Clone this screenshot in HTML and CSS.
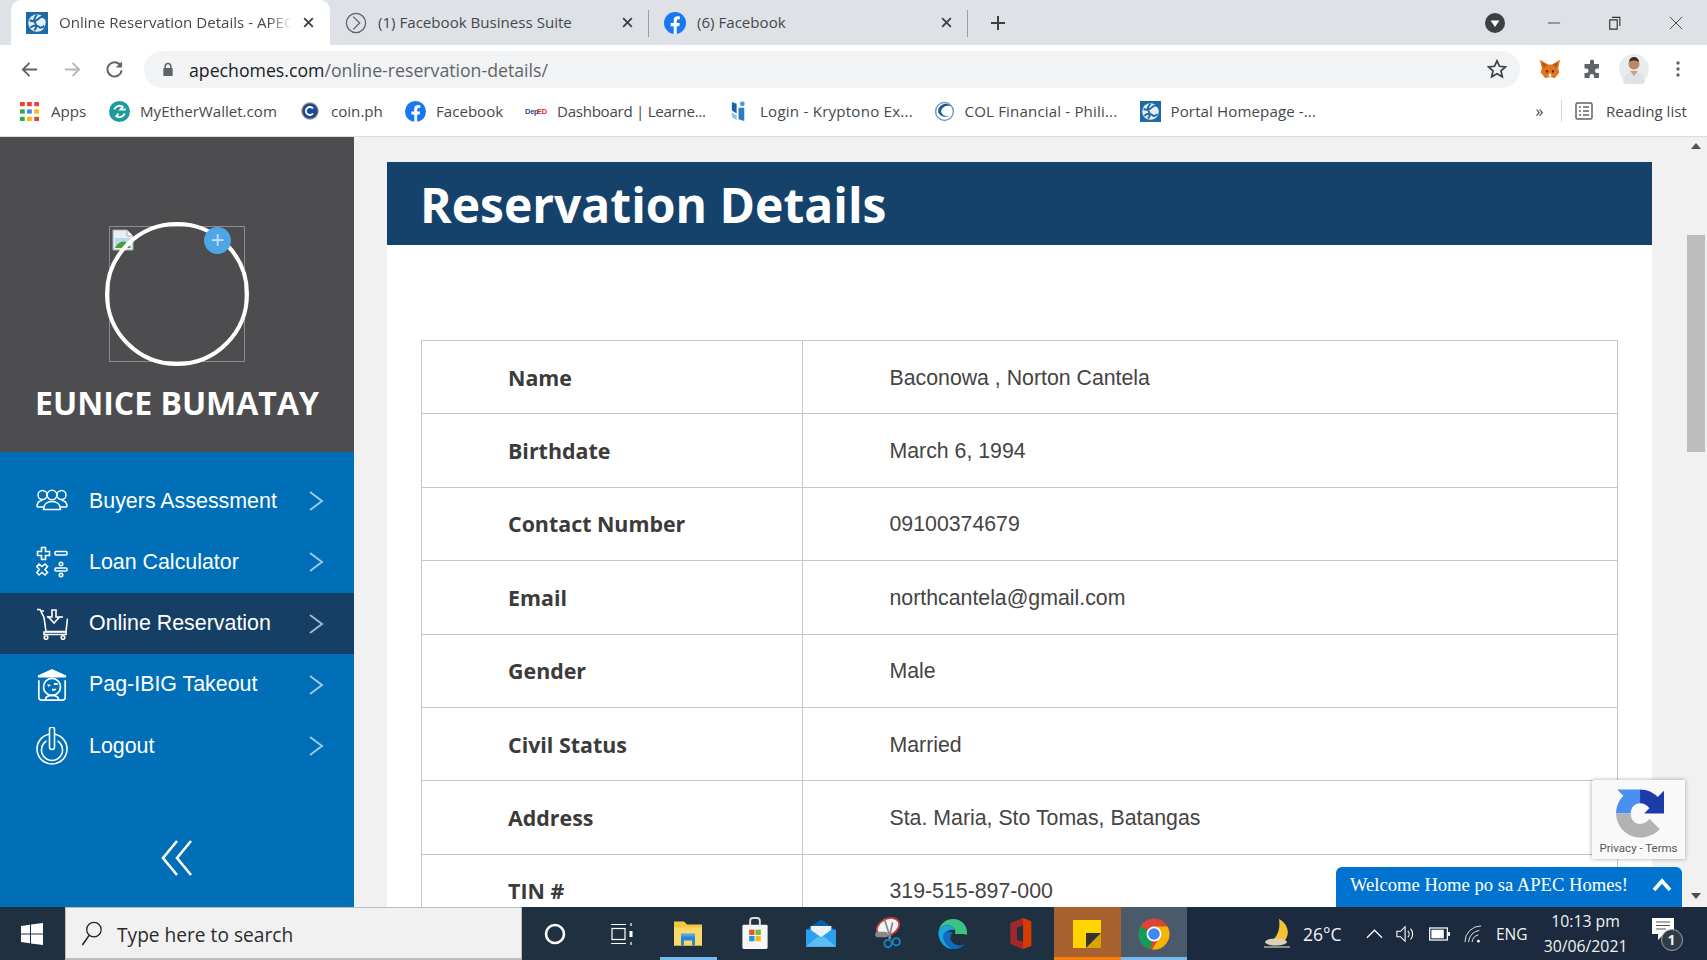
FILE: index.html
```html
<!DOCTYPE html>
<html lang="en">
<head>
<meta charset="utf-8">
<title>Online Reservation Details - APEC Homes</title>
<link rel="stylesheet" href="styles.css">
</head>
<body>
<svg class="defs" width="0" height="0">
  <symbol id="fb" viewBox="0 0 24 24"><circle cx="12" cy="12" r="12" fill="#1877f2"/><path d="M16.7 15.5l.5-3.5h-3.3V9.8c0-1 .5-1.9 2-1.9h1.5v-3c-2.9-.5-6.8-.6-6.8 4.3V12H7.3v3.5h3.3V24h3.3v-8.5z" fill="#fff"/></symbol>
  <symbol id="apec" viewBox="0 0 24 24"><rect width="24" height="24" fill="#1c6aa8"/><circle cx="12" cy="12" r="9.5" fill="#e6eef5"/><path d="M12 3c-3 3-4 6-2 9s1 6-1 8M4 9c4 2 7 1 10-2s5-2 7 0M5 17c3-3 7-3 9-1s4 1 6-1" fill="none" stroke="#1c6aa8" stroke-width="2.2"/></symbol>
  <symbol id="x" viewBox="0 0 12 12"><path d="M2 2l8 8M10 2l-8 8" stroke="#3c4043" stroke-width="1.7" fill="none"/></symbol>
  <symbol id="chev" viewBox="0 0 16 22"><path d="M2 2l12 9-12 9" fill="none" stroke="#fff" stroke-opacity=".62" stroke-width="2"/></symbol>
</svg>

<header class="tabstrip">
  <div class="tab active">
    <svg class="fav"><use href="#apec"/></svg>
    <span class="tab-title fade">Online Reservation Details - APEC</span>
    <svg class="tab-x"><use href="#x"/></svg>
  </div>
  <div class="tab sep">
    <svg class="fav" viewBox="0 0 24 24"><circle cx="12" cy="12" r="10.5" fill="none" stroke="#5f6368" stroke-width="1.4"/><path d="M9 5l7 7-7 7" fill="none" stroke="#5f6368" stroke-width="1.4"/></svg>
    <span class="tab-title">(1) Facebook Business Suite</span>
    <svg class="tab-x"><use href="#x"/></svg>
  </div>
  <div class="tab sep">
    <svg class="fav"><use href="#fb"/></svg>
    <span class="tab-title">(6) Facebook</span>
    <svg class="tab-x"><use href="#x"/></svg>
  </div>
  <svg class="newtab" viewBox="0 0 16 16"><path d="M8 1v14M1 8h14" stroke="#3c4043" stroke-width="2"/></svg>
  <svg class="tabsearch" viewBox="0 0 20 20"><circle cx="10" cy="10" r="10" fill="#3c4043"/><path d="M5.5 7.5h9L10 14z" fill="#fff"/></svg>
  <div class="winbtns">
    <svg viewBox="0 0 16 16"><path d="M1 8h14" stroke="#555" stroke-width="1.2"/></svg>
    <svg viewBox="0 0 16 16"><path d="M4.5 1.5h9v10M2 4.500h8.500V15H2z" fill="none" stroke="#333" stroke-width="1.3"/></svg>
    <svg viewBox="0 0 16 16"><path d="M1 1l14 14M15 1L1 15" stroke="#444" stroke-width="1.1"/></svg>
  </div>
</header>

<div class="toolbar">
  <svg class="nav-ico" viewBox="0 0 20 20"><path d="M18 10H3M10 3l-7 7 7 7" fill="none" stroke="#5f6368" stroke-width="2"/></svg>
  <svg class="nav-ico dim" viewBox="0 0 20 20"><path d="M2 10h15M10 3l7 7-7 7" fill="none" stroke="#b4b7bb" stroke-width="2"/></svg>
  <svg class="nav-ico" viewBox="0 0 20 20"><path d="M16.500 6A7.500 7.500 0 1 0 17.500 11" fill="none" stroke="#5f6368" stroke-width="2"/><path d="M17.800 1.500v6.500h-6.500z" fill="#5f6368"/></svg>
  <div class="omnibox">
    <svg class="lock" viewBox="0 0 12 16"><path d="M3 7V4.500a3 3 0 0 1 6 0V7" fill="none" stroke="#5f6368" stroke-width="1.600"/><rect x="1" y="6.500" width="10" height="8.500" rx="1" fill="#5f6368"/></svg>
    <span class="url"><span class="host">apechomes.com</span>/online-reservation-details/</span>
    <svg class="star" viewBox="0 0 20 20"><path d="M10 1.800l2.500 5.500 6 .6-4.500 4 1.300 5.900L10 14.800l-5.300 3 1.300-5.900-4.500-4 6-.6z" fill="none" stroke="#3c4043" stroke-width="1.700"/></svg>
  </div>
  <div class="ext">
    <svg class="ext-fox" viewBox="0 0 24 24"><path d="M1 2l9 5h4l9-5-2 9 1 5-5 6-3-1h-4l-3 1-5-6 1-5z" fill="#e2761b"/><path d="M7 13l3 1-1 3zM17 13l-3 1 1 3z" fill="#33241a"/><path d="M10 19l2-3 2 3-2 2z" fill="#f5e6d8"/><path d="M3 4l6 4-4 3zM21 4l-6 4 4 3z" fill="#b5591a"/></svg>
    <svg class="ext-puzzle" viewBox="0 0 20 20"><path d="M8 2.500a2 2 0 0 1 4 0V5h5v4.500h-1.800a2.200 2.200 0 0 0 0 4.400H17V19h-5v-1.800a2.200 2.200 0 0 0-4.400 0V19H2.500v-5h1.800a2.200 2.200 0 0 0 0-4.500H2.500V5H8z" fill="#5f6368"/></svg>
    <svg class="ext-avatar" viewBox="0 0 30 30"><circle cx="15" cy="15" r="15" fill="#e9ecec"/><path d="M4 28c1-7 5-10 11-10s10 3 11 10a15 15 0 0 1-22 0z" fill="#dfe3e4"/><circle cx="15" cy="10" r="5.500" fill="#b58a68"/><path d="M10 8a5 5 0 0 1 10 0c-3-2-7-2-10 0z" fill="#3a2a20"/><path d="M11 17l4 5 4-5z" fill="#c2a58d"/></svg>
    <svg class="ext-dots" viewBox="0 0 4 16"><circle cx="2" cy="2" r="1.700" fill="#5f6368"/><circle cx="2" cy="8" r="1.700" fill="#5f6368"/><circle cx="2" cy="14" r="1.700" fill="#5f6368"/></svg>
  </div>
</div>

<nav class="bookmarks">
  <a class="bm bm-apps"><svg class="bm-ico" viewBox="0 0 18 18"><g fill="#ea4335"><rect width="4.500" height="4" x="0" y="0"/><rect width="4.500" height="4" x="6.700" y="0"/><rect width="4.500" height="4" x="13.500" y="0"/></g><g fill="#34a853"><rect width="4.500" height="4" x="0" y="7"/></g><rect width="4.500" height="4" x="6.700" y="7" fill="#4285f4"/><rect width="4.500" height="4" x="13.500" y="7" fill="#fbbc05"/><g fill="#34a853"><rect width="4.500" height="4" x="0" y="14"/></g><g fill="#fbbc05"><rect width="4.500" height="4" x="6.700" y="14"/></g><rect width="4.500" height="4" x="13.500" y="14" fill="#ea4335"/></svg>Apps</a>
  <a class="bm bm-mew"><svg class="bm-ico" viewBox="0 0 20 20"><circle cx="10" cy="10" r="10" fill="#1f9a9c"/><path d="M5 8a5.500 5.500 0 0 1 8-2.500l-2 2.500h5M15 12a5.500 5.500 0 0 1-8 2.500l2-2.500" fill="none" stroke="#fff" stroke-width="1.900"/></svg>MyEtherWallet.com</a>
  <a class="bm bm-coin"><svg class="bm-ico small" viewBox="0 0 18 18"><circle cx="9" cy="9" r="9" fill="#c9b27a"/><circle cx="9" cy="9" r="7.800" fill="#1a4aa0"/><path d="M12 6.500a4 4 0 1 0 0 5" fill="none" stroke="#fff" stroke-width="1.800"/></svg>coin.ph</a>
  <a class="bm bm-fb"><svg class="bm-ico"><use href="#fb"/></svg>Facebook</a>
  <a class="bm bm-deped"><svg class="bm-ico" viewBox="0 0 22 12"><text class="deped-d" x="0" y="9">Dep</text><text class="deped-e" x="12" y="9">ED</text></svg>Dashboard | Learne...</a>
  <a class="bm bm-kr"><svg class="bm-ico" viewBox="0 0 20 22"><path d="M2 1l5 2v10l-5-3z" fill="#1a5fa8"/><circle cx="13" cy="3" r="2.500" fill="#3aa0dc"/><path d="M9 7h6v14l-6-2z" fill="#2b7cc0"/><path d="M2 12l5 3v5l-5-3z" fill="#8fc5e8"/></svg>Login - Kryptono Ex...</a>
  <a class="bm bm-col"><svg class="bm-ico" viewBox="0 0 20 20"><circle cx="10" cy="10" r="8.500" fill="none" stroke="#7a9cc0" stroke-width="1.400"/><path d="M16 5A7 7 0 0 0 4 11c2 4 7 5 11 3-3 1-7 0-8-3-1-4 4-8 9-6z" fill="#1b5e96"/></svg>COL Financial - Phili...</a>
  <a class="bm bm-portal"><svg class="bm-ico large"><use href="#apec"/></svg>Portal Homepage -...</a>
  <span class="bm-more">»</span>
  <span class="bm-sep"></span>
  <svg class="bm-list" viewBox="0 0 18 18"><rect x="1" y="1" width="16" height="16" rx="1.500" fill="none" stroke="#5f6368" stroke-width="1.500"/><path d="M4 5h2M8 5h6M4 9h2M8 9h6M4 13h2M8 13h6" stroke="#5f6368" stroke-width="1.500"/></svg>
  <span class="bm-reading">Reading list</span>
</nav>

<main class="page">
  <aside class="sidebar">
    <div class="profile">
      <div class="avatar">
        <svg class="broken" viewBox="0 0 22 22"><path d="M1 1h14l6 6v14H1z" fill="#e9eef2" stroke="#a9adb2"/><path d="M15 1v6h6" fill="#fff" stroke="#a9adb2"/><rect x="3" y="9" width="16" height="10" fill="#b9d7ef"/><path d="M3 19c3-6 8-8 12-5l4 5z" fill="#4aa02c"/></svg>
        <div class="ring"></div>
        <div class="plus">+</div>
      </div>
      <h2 class="person">EUNICE BUMATAY</h2>
    </div>
    <ul class="menu">
      <li class="menu-item">
        <svg class="menu-ico" viewBox="0 0 32 32"><g fill="none" stroke="#fff" stroke-width="1.500"><circle cx="6.500" cy="10" r="4.500"/><circle cx="25.500" cy="10" r="4.500"/><circle cx="16" cy="10" r="4.800"/><path d="M1 22c0-4 2-6.500 5.500-6.500M31 22c0-4-2-6.500-5.500-6.500M1 22h6M25 22h6"/><path d="M7.500 24.500c0-5 3.500-8 8.500-8s8.500 3 8.500 8z"/></g></svg>
        <span class="menu-label">Buyers Assessment</span><svg class="menu-chev"><use href="#chev"/></svg>
      </li>
      <li class="menu-item">
        <svg class="menu-ico" viewBox="0 0 32 32"><g fill="none" stroke="#fff" stroke-width="1.600"><path d="M5.500 1.500h4v4h4v4h-4v4h-4v-4h-4v-4h4z"/><rect x="19" y="5.500" width="12" height="3.500" rx="1"/><path d="M3 18l3 2.500L9 18l2.500 2.500-2.500 3 2.500 3L9 29l-3-2.500L3 29 .8 26.500l2.500-3-2.500-3z"/><rect x="19" y="22" width="12" height="3" rx="1"/><circle cx="25" cy="18" r="1.700"/><circle cx="25" cy="29" r="1.700"/></g></svg>
        <span class="menu-label">Loan Calculator</span><svg class="menu-chev"><use href="#chev"/></svg>
      </li>
      <li class="menu-item current">
        <svg class="menu-ico" viewBox="0 0 32 32"><g fill="none" stroke="#fff" stroke-width="1.600"><path d="M1 1.500h3l4 8 2 14h20l1.500-13"/><path d="M5 3l3 0M11 9h3M24 9h3"/><path d="M16 2h4v7h3.500L18 15l-5.500-6H16z"/><path d="M8 24h22v2.500H8z"/><circle cx="10" cy="29.500" r="1.800"/><circle cx="27" cy="29.500" r="1.800"/></g></svg>
        <span class="menu-label">Online Reservation</span><svg class="menu-chev"><use href="#chev"/></svg>
      </li>
      <li class="menu-item">
        <svg class="menu-ico" viewBox="0 0 32 34"><path d="M16 0L31 7v2H1V7z" fill="#fff"/><g fill="none" stroke="#fff" stroke-width="1.800"><path d="M2 12v18a3 3 0 0 0 3 3h22a3 3 0 0 0 3-3V12"/><circle cx="16" cy="19" r="9"/><path d="M9 33c0-4 3-5 7-5s7 1 7 5"/></g><path d="M11 16l4 1-3 2zM16 21h5l-2 2h-3zM18 15h4v2h-4z" fill="#fff"/></svg>
        <span class="menu-label">Pag-IBIG Takeout</span><svg class="menu-chev"><use href="#chev"/></svg>
      </li>
      <li class="menu-item">
        <svg class="menu-ico tall" viewBox="0 0 32 38"><g fill="none" stroke="#fff" stroke-width="1.600"><circle cx="16" cy="22" r="15"/><path d="M10.500 14a10.500 10.500 0 1 0 11 0"/><path d="M13.500 2.500a2.500 2.500 0 0 1 5 0V20a2.500 2.500 0 0 1-5 0z" fill="#006fb8"/></g></svg>
        <span class="menu-label">Logout</span><svg class="menu-chev"><use href="#chev"/></svg>
      </li>
    </ul>
    <svg class="collapse" viewBox="0 0 32 36"><path d="M16 1L2 18l14 17M30 1L16 18l14 17" fill="none" stroke="#fff" stroke-width="2.600"/></svg>
  </aside>

  <section class="content">
    <div class="card">
      <h1 class="banner">Reservation Details</h1>
      <div class="details">
        <div class="row"><div class="key">Name</div><div class="val">Baconowa , Norton Cantela</div></div>
        <div class="row"><div class="key">Birthdate</div><div class="val">March 6, 1994</div></div>
        <div class="row"><div class="key">Contact Number</div><div class="val">09100374679</div></div>
        <div class="row"><div class="key">Email</div><div class="val">northcantela@gmail.com</div></div>
        <div class="row"><div class="key">Gender</div><div class="val">Male</div></div>
        <div class="row"><div class="key">Civil Status</div><div class="val">Married</div></div>
        <div class="row"><div class="key">Address</div><div class="val">Sta. Maria, Sto Tomas, Batangas</div></div>
        <div class="row"><div class="key">TIN #</div><div class="val">319-515-897-000</div></div>
      </div>
    </div>
  </section>

  <div class="scrollbar">
    <span class="arrow up"></span>
    <span class="thumb"></span>
    <span class="arrow down"></span>
  </div>

  <div class="recaptcha">
    <svg class="rc-logo" viewBox="0 0 48 48"><path d="M2 25C2 18 5 12 9 8L3 2H25V15C20 15 16 19 16 25Z" fill="#4a90f0"/><path d="M25 2C32 2 38 5 42 9L48 3V25H29L34 20C32 17 29 15 25 15Z" fill="#1c3aa9"/><path d="M2 25H16C16 31 20 35 25 35 29 35 32 33 34 30L44 40C39 45 32 48 25 48 12 48 2 37 2 25Z" fill="#b3b3b3"/></svg>
    <span class="rc-text">Privacy - Terms</span>
  </div>
  <div class="chat">
    <span class="chat-text">Welcome Home po sa APEC Homes!</span>
    <svg class="chat-caret" viewBox="0 0 20 14"><path d="M2 12l8-9 8 9" fill="none" stroke="#fff" stroke-width="3.600"/></svg>
  </div>
</main>

<footer class="taskbar">
  <div class="start"><svg viewBox="0 0 22 22"><path d="M0 3l9-1.300V10.500H0zM10 1.500L22 0v10.500H10zM0 11.500h9v8.800L0 19zM10 11.500h12V22l-12-1.600z" fill="#fff"/></svg></div>
  <div class="search">
    <svg class="search-ico" viewBox="0 0 22 26"><circle cx="13" cy="9" r="7.500" fill="none" stroke="#222" stroke-width="1.300"/><path d="M8 15L1 25" stroke="#222" stroke-width="1.600"/></svg>
    <span>Type here to search</span>
  </div>
  <div class="tb-cell"><svg class="tb-s" viewBox="0 0 22 22"><circle cx="11" cy="11" r="9" fill="none" stroke="#fff" stroke-width="2.600"/></svg></div>
  <div class="tb-cell"><svg class="tb-s" viewBox="0 0 22 22"><g fill="none" stroke="#fff" stroke-width="1.200"><path d="M0 1.500h15M0 20.500h15"/><rect x="1" y="5.500" width="13" height="11"/><path d="M20 0v3M20 19v3"/></g><rect x="18.500" y="8" width="3" height="6" fill="#fff"/></svg></div>
  <div class="tb-cell running"><svg class="tb-m" viewBox="0 0 30 30"><path d="M1 3h10l3 3h15v21H1z" fill="#f5c842"/><path d="M1 9h28v18H1z" fill="#fbd96a"/><path d="M8 17h14v10h-3v-5h-8v5H8z" fill="#2f86c9"/><path d="M8 15h14v3H8z" fill="#47a7e6"/></svg></div>
  <div class="tb-cell"><svg class="tb-m" viewBox="0 0 30 34"><path d="M10 9V4a3 3 0 0 1 3-3h4a3 3 0 0 1 3 3v5" fill="none" stroke="#ddd" stroke-width="2"/><rect x="2" y="8" width="26" height="25" rx="1.500" fill="#f6f6f6"/><rect x="9" y="13" width="5.500" height="5.500" fill="#e2552e"/><rect x="15.500" y="13" width="5.500" height="5.500" fill="#7db82f"/><rect x="9" y="19.500" width="5.500" height="5.500" fill="#1a9ae0"/><rect x="15.500" y="19.500" width="5.500" height="5.500" fill="#f5b91d"/></svg></div>
  <div class="tb-cell"><svg class="tb-m" viewBox="0 0 32 32"><path d="M16 1L32 12v18H0V12z" fill="#0a5ea8"/><path d="M0 12h32v18H0z" fill="#2ba0ef"/><path d="M5 8h22v4L16 20 5 12z" fill="#e8f3fb"/><path d="M0 30l13-11 3 2 3-2 13 11z" fill="#5cbdf5"/></svg></div>
  <div class="tb-cell"><svg class="tb-m" viewBox="0 0 32 36"><ellipse cx="16" cy="11" rx="13" ry="9" transform="rotate(-28 16 11)" fill="#f3f3f3" stroke="#c8343a" stroke-width="2"/><rect x="2" y="16" width="14" height="6" rx="3" fill="#8a8a8a"/><path d="M12 2l7 22M21 6l-4 18" stroke="#7c8791" stroke-width="1.800"/><circle cx="16" cy="29" r="4" fill="none" stroke="#1a83c9" stroke-width="2"/><circle cx="25" cy="27" r="4" fill="none" stroke="#1a83c9" stroke-width="2"/></svg></div>
  <div class="tb-cell"><svg class="tb-l" viewBox="0 0 32 32"><path d="M29 17C30 7 23 1 15 1 7 1 1 7 .5 14 2 8 8 6 13 8c4 2 5 5 4 8h7c2 0 4 0 5 1z" fill="#39c481"/><path d="M.5 14C0 24 7 32 16 31c5 0 8-2 11-5-4 2-9 2-12-1-4-3-3-8 0-10-5-2-11-2-14.500-1z" fill="#0f6cbd"/><path d="M.5 14C2 8 8 6 13 8c2 1 3 2 4 4-5-1-11 1-12 6 0 5 3 10 9 13-7-1-14-8-13.500-17z" fill="#1aa6dd"/></svg></div>
  <div class="tb-cell"><svg class="tb-m" viewBox="0 0 24 32"><path d="M2 6L14 1l8 3v24l-8 3-12-5z" fill="#d83b01"/><path d="M2 6L14 1v7L8 10v12l6 2v7L2 26z" fill="#a4262c"/><path d="M8 10l6-2v16l-6-2z" fill="#1f3140"/></svg></div>
  <div class="tb-cell note running-orange"><svg class="tb-n" viewBox="0 0 30 30"><path d="M1 1h28v28H1z" fill="#ffd400"/><path d="M29 14V29H14Z" fill="#d9a400"/><path d="M14 14H29L14 29Z" fill="#333"/></svg></div>
  <div class="tb-cell active-app"><svg class="tb-l" viewBox="0 0 32 32"><circle cx="16" cy="16" r="15.500" fill="#db4437"/><path d="M16 16L2.600 8.300A15.500 15.500 0 0 0 12 31z" fill="#0f9d58"/><path d="M16 8.500h13.500A15.500 15.500 0 0 1 14 31.400L21 20z" fill="#f4b400"/><circle cx="16" cy="16" r="7.500" fill="#fff"/><circle cx="16" cy="16" r="5.800" fill="#4285f4"/></svg></div>
  <div class="tray">
    <svg class="moon" viewBox="0 0 32 32"><path d="M17 1c11 6 11 18 4 23-6 3-12 3-16 0 8-1 14-10 12-23z" fill="#f4c430"/><ellipse cx="14" cy="24" rx="11" ry="3.500" fill="#d8d2b8"/><path d="M2 29h26" stroke="#8c8c7a" stroke-width="2"/></svg>
    <span class="temp">26°C</span>
    <svg class="caret" viewBox="0 0 18 10"><path d="M1 9l8-8 8 8" fill="none" stroke="#fff" stroke-width="1.300"/></svg>
    <svg class="vol" viewBox="0 0 22 20"><path d="M1 7h4l5-5v16l-5-5H1z" fill="none" stroke="#fff" stroke-width="1.200"/><path d="M13 6.500a5 5 0 0 1 0 7M16 4a9 9 0 0 1 0 12" fill="none" stroke="#fff" stroke-width="1.200"/></svg>
    <svg class="batt" viewBox="0 0 22 14"><rect x=".7" y=".7" width="18.500" height="12.600" fill="none" stroke="#fff" stroke-width="1.300"/><rect x="2.500" y="2.500" width="13" height="9" fill="#fff"/><rect x="20" y="5" width="2" height="4" fill="#fff"/></svg>
    <svg class="wifi" viewBox="0 0 20 20"><path d="M1 19A18 18 0 0 1 19 1M5 19A14 14 0 0 1 17 6M9 19A9 9 0 0 1 16 11" fill="none" stroke="#dfe3e6" stroke-width="1.100"/><circle cx="16" cy="18" r="1.500" fill="#fff"/></svg>
    <span class="lang">ENG</span>
    <div class="clock"><span>10:13 pm</span><span>30/06/2021</span></div>
    <div class="notif">
      <svg class="notif-ico" viewBox="0 0 22 24"><path d="M0 0h22v16H12l-6 6v-6H0z" fill="#fff"/><path d="M4 4h14M4 7.500h14M4 11h10" stroke="#555" stroke-width="1.100"/></svg>
      <span class="badge">1</span>
    </div>
  </div>
</footer>
</body>
</html>
```

FILE: styles.css
```css
* { box-sizing: border-box; }
html, body { height: 100%; }
body {
  margin: 0;
  width: 1707px;
  height: 960px;
  overflow: hidden;
  display: flex;
  flex-direction: column;
  background: #fff;
  font-family: "Open Sans", sans-serif;
  color: #3c4043;
}
.defs { position: absolute; }
h1, h2, ul { margin: 0; padding: 0; }
li { list-style: none; }

/* tab strip */
.tabstrip {
  height: 45px;
  flex: none;
  display: flex;
  align-items: stretch;
  padding-left: 11px;
  background: #dee1e6;
  position: relative;
}
.tab {
  width: 319px;
  display: flex;
  align-items: center;
  padding: 0 15px;
  position: relative;
}
.tab.active { background: #fff; border-radius: 10px 10px 0 0; }
.tab.sep::after {
  content: "";
  position: absolute;
  right: 0;
  top: 10px;
  bottom: 8px;
  width: 1px;
  background: #9a9ea3;
}
.fav { width: 22px; height: 22px; flex: none; }
.tab-title {
  margin-left: 11px;
  padding-bottom: 2px;
  flex: 1;
  font-size: 15.100px;
  white-space: nowrap;
  color: #45484c;
}
.fade {
  -webkit-mask-image: linear-gradient(90deg, #000 90%, transparent 100%);
  mask-image: linear-gradient(90deg, #000 90%, transparent 100%);
  flex: none;
  width: 233px;
  margin-right: 10px;
}
.tab-x { width: 13px; height: 13px; flex: none; }
.newtab { width: 16px; height: 16px; align-self: center; margin-left: 22px; }
.tabsearch { width: 20px; height: 20px; align-self: center; margin-left: 479px; }
.winbtns { display: flex; align-items: center; gap: 47px; margin-left: 42px; }
.winbtns svg { width: 14px; height: 14px; }

/* toolbar */
.toolbar {
  height: 45px;
  flex: none;
  display: flex;
  align-items: center;
  padding: 3px 0 0 20px;
  gap: 23.500px;
  background: #fff;
}
.nav-ico { width: 19px; height: 19px; flex: none; }
.omnibox {
  width: 1376px;
  height: 37px;
  margin-left: -3.500px;
  background: #f1f3f4;
  border-radius: 19px;
  display: flex;
  align-items: center;
  padding: 0 13px 0 18px;
  flex: none;
}
.lock { width: 12px; height: 15px; flex: none; }
.url { margin-left: 15px; padding-top: 1px; font-size: 17.700px; color: #5f6368; flex: 1; white-space: nowrap; }
.host { color: #202124; }
.star { width: 20px; height: 20px; flex: none; }
.ext { display: flex; align-items: center; margin-left: -5px; }
.ext-fox { width: 22px; height: 22px; margin-left: .5px; }
.ext-puzzle { width: 20px; height: 20px; margin-left: 21px; }
.ext-avatar { width: 30px; height: 30px; margin-left: 17px; }
.ext-dots { width: 4px; height: 16px; margin-left: 27px; }

/* bookmarks */
.bookmarks {
  height: 47px;
  flex: none;
  display: flex;
  align-items: center;
  padding: 0 0 4px 20px;
  border-bottom: 1px solid #dcdcdc;
  font-size: 15.100px;
  color: #45484c;
  white-space: nowrap;
}
.bm { display: flex; align-items: center; }
.bm-ico { width: 21px; height: 21px; margin-right: 10px; flex: none; }
.bm-ico.small { width: 18px; height: 18px; margin-right: 12px; margin-left: 2px; }
.bm-ico.large { width: 21px; height: 23px; }
.bm-apps { width: 89px; }
.bm-apps .bm-ico { width: 19px; height: 19px; margin-right: 12px; }
.bm-mew { width: 190px; }
.bm-coin { width: 106px; }
.bm-fb { width: 120px; }
.bm-deped { width: 204px; letter-spacing: -.28px; }
.bm-deped .bm-ico { width: 22px; height: 12px; }
.bm-kr { width: 204.500px; letter-spacing: .22px; }
.bm-col { width: 206px; letter-spacing: .15px; }
.bm-portal { width: 396px; letter-spacing: .1px; }
.deped-d { font: bold 7.500px "Liberation Sans", sans-serif; fill: #2a4a9a; }
.deped-e { font: bold 7.500px "Liberation Sans", sans-serif; fill: #d0342c; }
.bm-more { width: 20px; font-size: 16px; }
.bm-sep { width: 1px; height: 22px; margin: 0 13px 0 5.500px; background: #d5d7da; }
.bm-list { width: 18px; height: 18px; margin-right: 13px; }

/* page */
.page {
  flex: 1;
  min-height: 0;
  display: flex;
  position: relative;
  background: #f1f1f1;
}
.sidebar {
  width: 354px;
  flex: none;
  display: flex;
  flex-direction: column;
  background: #006fb8;
  padding-bottom: 31px;
}
.profile {
  height: 315px;
  flex: none;
  background: #4d4d4f;
  padding-top: 89px;
  display: flex;
  flex-direction: column;
  align-items: center;
}
.avatar {
  width: 136px;
  height: 136px;
  border: 1.500px solid #8d8d8f;
  position: relative;
}
.broken { position: absolute; left: 2px; top: 2px; width: 22px; height: 22px; }
.ring {
  position: absolute;
  left: -5px;
  top: -5px;
  width: 144px;
  height: 144px;
  border: 4px solid #fff;
  border-radius: 50%;
}
.plus {
  position: absolute;
  left: 94px;
  top: 0;
  width: 27px;
  height: 27px;
  border-radius: 50%;
  background: #4ea6e6;
  color: #bfe0f7;
  text-align: center;
  font: 24px/26px "Liberation Sans", sans-serif;
}
.person {
  margin-top: 18.500px;
  font-size: 32px;
  line-height: 44px;
  font-weight: 700;
  color: #fff;
  white-space: nowrap;
}
.menu { padding-top: 18.400px; }
.menu-item {
  height: 61.300px;
  display: flex;
  align-items: center;
  padding: 0 30px 0 36px;
  color: #fff;
  font: 21.400px "Liberation Sans", sans-serif;
}
.menu-item.current { background: #163f66; }
.menu-ico { width: 32px; height: 32px; flex: none; }
.menu-ico.tall { height: 38px; }
.menu-label { margin-left: 21px; flex: 1; }
.menu-chev { width: 16px; height: 22px; flex: none; }
.collapse { width: 32px; height: 36px; margin: auto auto 0; }

/* content */
.content { flex: 1; min-width: 0; padding: 25px 33px 0; overflow: hidden; }
.card { background: #fff; height: 100%; overflow: hidden; }
.banner {
  height: 83px;
  padding-left: 33px;
  background: #15426b;
  color: #fff;
  font-size: 48px;
  line-height: 85px;
  font-weight: 700;
}
.details {
  margin: 95px 34px 0 34px;
  border: solid #c6c6c6;
  border-width: 1px 1px 0;
}
.row {
  height: 73.400px;
  display: grid;
  grid-template-columns: 381px 1fr;
  border-bottom: 1px solid #c6c6c6;
  align-items: center;
}
.key {
  height: 100%;
  display: flex;
  align-items: center;
  padding-left: 86px;
  border-right: 1px solid #c6c6c6;
  font-size: 21.400px;
  font-weight: 700;
  color: #3b3b3b;
}
.val {
  padding: 2px 0 0 86.500px;
  font: 21.300px "Liberation Sans", sans-serif;
  color: #444;
}

/* scrollbar */
.scrollbar {
  width: 22px;
  flex: none;
  position: relative;
  padding-top: 98px;
  display: flex;
  flex-direction: column;
  align-items: center;
}
.thumb { width: 18px; height: 217px; background: #bdbdbd; }
.arrow { position: absolute; left: 6px; border: 5px solid transparent; }
.arrow.up { top: 6px; border-top: 0; border-bottom: 6px solid #505050; }
.arrow.down { bottom: 8px; border-bottom: 0; border-top: 6px solid #505050; }

/* floating */
.recaptcha {
  position: absolute;
  right: 22px;
  top: 643px;
  width: 93px;
  height: 79px;
  background: #f9f9f9;
  border-radius: 2px 0 0 2px;
  box-shadow: 0 0 4px rgba(0,0,0,.35);
  display: flex;
  flex-direction: column;
  align-items: center;
  padding-top: 7px;
}
.rc-logo { width: 50px; height: 51px; }
.rc-text { font: 11.500px "Roboto", sans-serif; color: #555; margin-top: 3px; white-space: nowrap; }
.chat {
  position: absolute;
  right: 25px;
  bottom: 0;
  width: 346px;
  height: 40px;
  background: #0073d1;
  border-radius: 6px 6px 0 0;
  display: flex;
  align-items: center;
  justify-content: space-between;
  padding: 0 10px 4px 14px;
  color: #fff;
}
.chat-text { font: 18.600px "Liberation Serif", serif; white-space: nowrap; }
.chat-caret { width: 20px; height: 14px; }

/* taskbar */
.taskbar {
  height: 53px;
  flex: none;
  display: flex;
  align-items: stretch;
  background: #1f3140;
  color: #fff;
}
.start { width: 65px; display: flex; align-items: center; justify-content: center; padding-right: 2px; }
.start svg { width: 22px; height: 22px; }
.search {
  width: 457px;
  background: #f1f1f1;
  border: 1px solid #bdbdbd;
  border-bottom-width: 2px;
  display: flex;
  align-items: center;
  padding: 3px 0 0 15px;
  color: #2b2b2b;
  font-size: 19.150px;
}
.search-ico { width: 22px; height: 25px; margin: -3px 14px 0 0; flex: none; }
.tb-cell {
  width: 66.500px;
  flex: none;
  display: flex;
  align-items: center;
  justify-content: center;
  position: relative;
}
.tb-s { width: 22px; height: 22px; }
.tb-m { width: 30px; height: 33px; }
.tb-n { width: 30px; height: 30px; }
.tb-l { width: 32px; height: 34px; }
.running::after, .running-orange::after, .active-app::after {
  content: "";
  position: absolute;
  left: 5px;
  right: 5px;
  bottom: 0;
  height: 3px;
  background: #76b9ed;
}
.note { background: #a9622f; }
.running-orange::after { left: 0; right: 0; background: #f7800a; }
.active-app { background: #4a5a6b; }
.active-app::after { left: 0; right: 0; }
.tray { flex: 1; display: flex; align-items: center; font-size: 17.500px; color: #f2f2f2; background: #1b2a3f; }
.moon { width: 32px; height: 32px; margin-left: 75px; flex: none; }
.temp { margin-left: 9px; width: 42px; white-space: nowrap; }
.caret { width: 17px; height: 10px; margin-left: 21px; flex: none; }
.vol { width: 20px; height: 20px; margin-left: 13px; flex: none; }
.batt { width: 21px; height: 14px; margin-left: 13px; flex: none; }
.wifi { width: 18px; height: 18px; margin-left: 14px; flex: none; }
.lang { margin-left: 14px; font-size: 15.500px; }
.clock {
  width: 90px;
  margin-left: 13px;
  display: flex;
  flex-direction: column;
  align-items: center;
  gap: 3px;
  font-size: 15.800px;
  line-height: 22px;
  white-space: nowrap;
}
.notif { position: relative; margin-left: 20px; width: 32px; height: 36px; }
.notif-ico { width: 22px; height: 24px; position: absolute; left: 1px; top: 2px; }
.badge {
  position: absolute;
  left: 10px;
  top: 13px;
  width: 22px;
  height: 22px;
  border-radius: 50%;
  background: #2f3b45;
  border: 1px solid #9aa3aa;
  text-align: center;
  font-size: 14px;
  font-weight: 700;
  line-height: 20px;
}
```
